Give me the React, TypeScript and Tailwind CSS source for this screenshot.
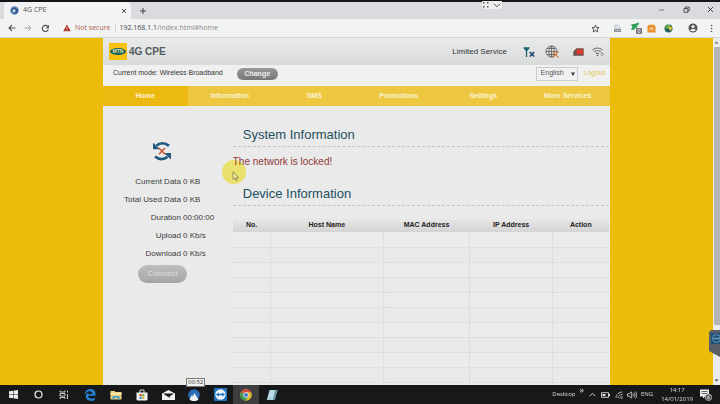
import { useState } from "react";
import type { ReactNode } from "react";

const menu = ["Home", "Information", "SMS", "Promotions", "Settings", "More Services"];

const stats = [
  { label: "Current Data", value: "0 KB" },
  { label: "Total Used Data", value: "0 KB" },
  { label: "Duration", value: "00:00:00" },
  { label: "Upload", value: "0 Kb/s" },
  { label: "Download", value: "0 Kb/s" },
];

const columns = [
  { name: "No.", width: "w-[10%]" },
  { name: "Host Name", width: "w-[30%]" },
  { name: "MAC Address", width: "w-[23%]" },
  { name: "IP Address", width: "w-[22%]" },
  { name: "Action", width: "w-[15%]" },
];

const rows = Array.from({ length: 11 }, (_, i) => i);

const TabBar = () => (
  <div className="flex h-[19px] shrink-0 border-t-2 border-[#15161a] bg-[#d9dbde]">
    <div className="ml-1 flex w-[127px] items-center rounded-t bg-[#f2f3f3] pl-[6px] pr-1">
      <svg viewBox="0 0 9 9" className="h-[9px] w-[9px]">
        <circle cx="4.5" cy="4.5" r="4.2" fill="#5b86b8" />
        <path d="M2 5.5C2 2 6 1.500 6.500 4.500M4.500 7C7 7 7.500 5 7 3" stroke="#1f3f77" strokeWidth="1.200" fill="none" />
        <circle cx="4" cy="4.600" r="1.300" fill="#dbe8f5" />
      </svg>
      <span className="ml-1 flex-1 text-[7px] text-[#555]">4G CPE</span>
      <button aria-label="Close tab">
        <svg viewBox="0 0 6 6" className="h-[6px] w-[6px]">
          <path d="M1 1l4 4M5 1l-4 4" stroke="#444" strokeWidth="0.9" />
        </svg>
      </button>
    </div>
    <button aria-label="New tab" className="ml-2">
      <svg viewBox="0 0 8 8" className="h-2 w-2">
        <path d="M4 1v6M1 4h6" stroke="#444" strokeWidth="1" />
      </svg>
    </button>
    <div className="ml-auto flex items-center pr-1 pb-[3px]">
      <button aria-label="Minimise" className="mr-[18px]">
        <svg viewBox="0 0 7 7" className="h-[7px] w-[7px]">
          <path d="M1 4h5" stroke="#666" strokeWidth="0.8" />
        </svg>
      </button>
      <button aria-label="Restore" className="mr-[17px]">
        <svg viewBox="0 0 7 7" className="h-[7px] w-[7px]" fill="none" stroke="#333" strokeWidth="0.8">
          <path d="M1 2.500h3.800v3.800H1zM2.300 2.300V1h3.900v3.900H5" />
        </svg>
      </button>
      <button aria-label="Close" className="mr-[2px]">
        <svg viewBox="0 0 7 7" className="h-[7px] w-[7px]">
          <path d="M1 1l5 5M6 1l-5 5" stroke="#222" strokeWidth="0.8" />
        </svg>
      </button>
    </div>
  </div>
);

const Toolbar = () => (
  <div className="flex h-[19px] shrink-0 items-center border-b border-[#d4d6d4] bg-[#f2f3f3] pl-2 pr-[7px] text-[7px]">
    <button aria-label="Back">
      <svg viewBox="0 0 8 8" className="h-2 w-2" fill="none" stroke="#555" strokeWidth="1.100">
        <path d="M7.500 4H1M4 1L1 4l3 3" />
      </svg>
    </button>
    <button aria-label="Forward" className="ml-2">
      <svg viewBox="0 0 8 8" className="h-2 w-2" fill="none" stroke="#aaa" strokeWidth="1">
        <path d="M.5 4H7M4 1l3 3-3 3" />
      </svg>
    </button>
    <button aria-label="Reload" className="ml-[9px]">
      <svg viewBox="0 0 9 9" className="h-[9px] w-[9px]">
        <path d="M7.300 5.600A3.100 3.100 0 1 1 6.800 2.400" fill="none" stroke="#555" strokeWidth="1.200" />
        <path d="M8 .8v3.400H4.600z" fill="#555" />
      </svg>
    </button>
    <svg viewBox="0 0 8 8" className="ml-[13px] h-2 w-2">
      <path d="M4 .5L7.800 7.300H.2z" fill="#b1372f" />
      <path d="M4 3v2M4 5.700v.8" stroke="#f2f3f3" strokeWidth="0.7" />
    </svg>
    <span className="ml-1 text-[#b0604f]">Not secure</span>
    <span className="mx-[4px] h-2 w-px bg-[#d5d5d5]" />
    <span className="flex-1 text-[#888]">
      <span className="text-[#444]">192.168.1.1</span>/index.html#home
    </span>
    <button aria-label="Bookmark this page">
      <svg viewBox="0 0 24 24" className="h-[9px] w-[9px]" fill="none" stroke="#444" strokeWidth="2.500">
        <path d="M12 3l2.700 6.300 6.800.6-5.200 4.500 1.600 6.700L12 17.500l-5.900 3.600 1.600-6.700L2.500 9.900l6.800-.6z" />
      </svg>
    </button>
    <svg viewBox="0 0 9 9" className="ml-[13px] h-[9px] w-[9px]">
      <path d="M2 1h3.500L7 2.500V5H2z" fill="#dfe2e8" stroke="#aab" strokeWidth="0.5" />
      <path d="M1 5h7v3H1z" fill="#8b8f9a" />
      <path d="M2 6.500h5" stroke="#ddd" strokeWidth="0.6" />
    </svg>
    <svg viewBox="0 0 12 12" className="ml-2 h-3 w-3">
      <path d="M1 2.500L4 2l5-1.500L8.500 3l-2 .8L8 5 5.500 6 4 8 .8 7.500 2.500 5z" fill="#2c9d59" />
      <rect x="6" y="6" width="6" height="6" rx="1" fill="#777" />
      <path d="M8 7.500h2v3H8z" fill="none" stroke="#ddd" strokeWidth="0.7" />
    </svg>
    <svg viewBox="0 0 9 9" className="ml-[5px] h-[9px] w-[9px]">
      <path d="M.5 2.500L2 .8h5l1.500 1.700v6h-8z" fill="#e88b25" />
      <path d="M2.500 5a2 2 0 0 1 4 0v1.500h-4z" fill="#f6c993" />
      <path d="M3.800 6.500V5h1.400v1.500" fill="#e88b25" />
    </svg>
    <svg viewBox="0 0 9 9" className="ml-2 h-[9px] w-[9px]">
      <circle cx="4.500" cy="4.500" r="4" fill="#2a6b54" />
      <path d="M1 3.500C2 1 5 .5 6.500 1.500L4.500 5z" fill="#6cb04c" />
      <path d="M5 2.500l3 .5-1 4-2-1.500z" fill="#e9bf32" />
      <path d="M2.500 5.500h3L5 8.300z" fill="#1f4a86" />
    </svg>
    <button aria-label="Profile" className="ml-[15px]">
      <svg viewBox="0 0 10 10" className="h-[10px] w-[10px]">
        <circle cx="5" cy="5" r="4.500" fill="#555" />
        <circle cx="5" cy="3.600" r="1.500" fill="#f2f3f3" />
        <path d="M2.200 7.200C3 5.600 7 5.600 7.800 7.200 7 8.700 3 8.700 2.200 7.200z" fill="#f2f3f3" />
      </svg>
    </button>
    <button aria-label="Menu" className="ml-3">
      <svg viewBox="0 0 3 9" className="h-[9px] w-[3px]" fill="#555">
        <circle cx="1.500" cy="1.500" r=".8" />
        <circle cx="1.500" cy="4.500" r=".8" />
        <circle cx="1.500" cy="7.500" r=".8" />
      </svg>
    </button>
  </div>
);

const SiteHeader = () => (
  <header className="flex h-[27px] items-center bg-linear-to-b from-[#e9eaea] to-[#d9dada] pl-[6px] pr-[6px]">
    <div className="flex h-[17px] w-[18px] items-center justify-center bg-[#f7c110]">
      <span className="flex h-[7px] w-[16px] items-center justify-center rounded-[50%] bg-[#14605f] text-[5px] font-bold leading-none text-[#e9e2a0]">
        MTN
      </span>
    </div>
    <h1 className="ml-[2px] flex-1 text-[10px] font-bold text-[#555b60]">4G CPE</h1>
    <span className="text-[8px] text-[#333]">Limited Service</span>
    <svg viewBox="0 0 12 12" className="ml-4 h-3 w-3" fill="none">
      <path d="M.5 1.800h6M1.200 2l2.300 2.800L5.800 2M3.500 2v9" stroke="#17606f" strokeWidth="1.300" />
      <path d="M6.800 6l4.400 4.500M11.200 6l-4.400 4.500" stroke="#123f72" strokeWidth="1.500" />
    </svg>
    <svg viewBox="0 0 15 14" className="ml-[10px] h-[14px] w-[15px]" fill="none">
      <g stroke="#666" strokeWidth="0.9">
        <circle cx="6.500" cy="6.500" r="5.500" />
        <ellipse cx="6.500" cy="6.500" rx="2.600" ry="5.500" />
        <path d="M6.500 1v11M1 6.500h11M2 3.500h9M2 9.500h9" />
      </g>
      <path d="M7.500 6.500l6 6M13.500 6.500l-6 6" stroke="#d67f4c" strokeWidth="1.200" />
    </svg>
    <svg viewBox="0 0 11 8" className="ml-[13px] h-2 w-[11px]">
      <path d="M3.500.3h7.200v7.400H.3V3.500z" fill="#69504e" />
      <path d="M4.500 1.200H10v5H3.500V3z" fill="#d83c31" />
    </svg>
    <svg viewBox="0 0 12 10" className="ml-2 h-[10px] w-3" fill="none" stroke="#777" strokeWidth="1.100">
      <path d="M.5 3.200c3-3 7-3 10 0M2.300 5c2-2 4.500-2 6.400 0M4 6.800c1-.9 2-.9 3 0" />
      <circle cx="5.500" cy="8.300" r=".8" fill="#555" stroke="none" />
      <ellipse cx="10.200" cy="7" rx="1" ry="1.600" strokeWidth="0.6" />
    </svg>
  </header>
);

const Section = ({ title, children }: { title: string; children: ReactNode }) => (
  <section>
    <h2 className="h-[21px] border-b border-dashed border-[#c3c3c3] pl-[10px] text-[13px] leading-[18px] text-[#1d4f60]">
      {title}
    </h2>
    {children}
  </section>
);

const Sidebar = () => (
  <aside className="flex w-[25%] flex-col pt-[35px]">
    <svg viewBox="0 0 20 20" className="ml-[49px] h-5 w-5" fill="none">
      <path d="M4.500 4.500C8 1.500 13 1.500 17 4.800" stroke="#21597f" strokeWidth="2.800" />
      <path d="M1 1.800v6.400h7z" fill="#21597f" />
      <path d="M15.500 15.800c-3.500 3-8.500 3-12.500-.3" stroke="#21597f" strokeWidth="2.800" />
      <path d="M19 18.500v-6.400h-7z" fill="#21597f" />
      <path d="M7 7l6 6.200M13 7l-6 6.200" stroke="#cc5233" strokeWidth="1.500" />
    </svg>
    <dl className="mt-3 text-[8px] leading-[18px] text-[#3c3c3c]">
      {stats.map((item) => (
        <div key={item.label} className="flex gap-[2px]">
          <dt className="w-[78px] text-right">{item.label}</dt>
          <dd>{item.value}</dd>
        </div>
      ))}
    </dl>
    <button className="ml-[35px] mt-[2px] h-[18px] w-[49px] rounded-full bg-linear-to-b from-[#bfbfbf] to-[#a5a5a5] text-[8px] text-[#dedede]">
      Connect
    </button>
  </aside>
);

const DeviceTable = () => (
  <table className="mt-[11px] w-full table-fixed border-collapse">
    <thead>
      <tr className="h-[15px] bg-linear-to-b from-[#ebebeb] to-[#d3d3d3] text-[7px] text-[#222]">
        {columns.map((col) => (
          <th key={col.name} className={`${col.width} p-0 font-bold leading-none`}>
            {col.name}
          </th>
        ))}
      </tr>
    </thead>
    <tbody>
      {rows.map((row) => (
        <tr key={row} className="h-[15px] odd:bg-[#ebebeb] even:bg-[#e8e9e9]">
          {columns.map((col) => (
            <td key={col.name} className="border-b border-r border-dotted border-[#d6d6d6] p-0 last:border-r-0" />
          ))}
        </tr>
      ))}
    </tbody>
  </table>
);

const Taskbar = () => (
  <footer className="relative flex h-[19px] shrink-0 items-center bg-[#17181a] text-[6px] text-[#ddd]">
    <nav className="flex h-full items-center">
      <button aria-label="Start" className="flex w-[26px] justify-center">
        <svg viewBox="0 0 9 9" className="h-[9px] w-[9px]" fill="#eee">
          <path d="M0 1.300L4 .8v3.400H0zM4.500.7L9 0v4.200H4.500zM0 4.800h4v3.400l-4-.5zM4.500 4.800H9V9l-4.500-.7z" />
        </svg>
      </button>
      <button aria-label="Cortana" className="flex w-[25px] justify-center">
        <svg viewBox="0 0 9 9" className="h-[9px] w-[9px]">
          <circle cx="4.500" cy="4.500" r="3.500" fill="none" stroke="#eee" strokeWidth="1.200" />
        </svg>
      </button>
      <button aria-label="Task view" className="flex w-[26px] justify-center">
        <svg viewBox="0 0 10 9" className="h-[9px] w-[10px]" fill="none" stroke="#ddd" strokeWidth="0.9">
          <path d="M1 .5v1.500h5V.5M1 3.500h5v2.500H1zM1 9V7.500h5V9M8.500.5v2M8.500 4v5" />
        </svg>
      </button>
      <button aria-label="Edge" className="flex w-[26px] justify-center">
        <svg viewBox="0 0 24 24" className="h-3 w-3">
          <path d="M1 11C2 3 8 0 13 0c6 0 10 4 10 10v3.500H8c.3 6 8 7 13.500 3.800v4.800C14 26 4 23.500 3.600 15 3.500 11 6 8 9.500 6.500 8.500 8 8 9 8 10h8.500c.2-4-2-5.500-5.200-5.400C7 4.700 3.500 7.500 1 11z" fill="#2580d2" />
        </svg>
      </button>
      <button aria-label="File Explorer" className="flex w-[26px] justify-center">
        <svg viewBox="0 0 12 10" className="h-[10px] w-3">
          <path d="M.5 1h4l1 1h6v7.500H.5z" fill="#f0d27a" />
          <path d="M.5 3h11v1.500H.5z" fill="#fbecb4" />
          <path d="M2.500 9.500V6h7v3.500h-2V7.800h-3v1.700z" fill="#4d9fc4" />
        </svg>
      </button>
      <button aria-label="Store" className="flex w-[26px] justify-center">
        <svg viewBox="0 0 12 12" className="h-3 w-3">
          <path d="M4 4V1h4v3" fill="none" stroke="#eee" strokeWidth="0.9" />
          <path d="M.5 3.500h11v7l-1 1h-9l-1-1z" fill="#f1f1f1" />
          <path d="M3.500 5h2.200v2.200H3.500z" fill="#d9512c" />
          <path d="M6.200 5h2.200v2.200H6.200z" fill="#7cae36" />
          <path d="M3.500 7.700h2.200v2.200H3.500z" fill="#3a8fd0" />
          <path d="M6.200 7.700h2.200v2.200H6.200z" fill="#e6b430" />
        </svg>
      </button>
      <button aria-label="Mail" className="flex w-[26px] justify-center">
        <svg viewBox="0 0 13 10" className="h-[10px] w-[13px]">
          <path d="M0 3.500L6.500 0 13 3.500V10H0z" fill="#f1f1f1" />
          <path d="M1 3.600h11L7.500 6.500 9 8 5.500 6.400z" fill="#17181a" />
        </svg>
      </button>
      <button aria-label="NordVPN" className="flex w-[26px] justify-center">
        <svg viewBox="0 0 12 12" className="h-3 w-3">
          <circle cx="6" cy="6" r="5.800" fill="#2d6eb8" />
          <path d="M1.500 10.500L4 6l1 1.400L6.300 4l4.200 6.500C8 12.500 4 12.500 1.500 10.500z" fill="#eef3f8" />
        </svg>
      </button>
      <button aria-label="TeamViewer" className="flex w-[26px] justify-center">
        <svg viewBox="0 0 13 13" className="h-[13px] w-[13px]">
          <rect width="13" height="13" rx="1" fill="#2272bd" />
          <circle cx="6.500" cy="6.500" r="5.200" fill="#eef4fa" />
          <path d="M1.800 6.500l3-2v1.300h3.400V4.500l3 2-3 2V7.200H4.800v1.300z" fill="#2272bd" />
        </svg>
      </button>
      <button aria-label="Chrome" className="flex h-full w-[26px] items-center justify-center bg-[#3e3e40]">
        <svg viewBox="0 0 12 12" className="h-3 w-3">
          <circle cx="6" cy="6" r="5.800" fill="#e3b92f" />
          <path d="M6 6L.9 3.200A5.800 5.800 0 0 1 11.100 3.300H6z" fill="#d44a3a" />
          <path d="M.9 3.200A5.800 5.800 0 0 0 5.500 11.800L8.200 7.300 6 6z" fill="#3c9b55" />
          <circle cx="6" cy="6" r="2.700" fill="#f1f1f1" />
          <circle cx="6" cy="6" r="2.100" fill="#4a80cf" />
        </svg>
      </button>
      <button aria-label="Notepad" className="flex w-[26px] justify-center">
        <svg viewBox="0 0 12 12" className="h-3 w-3">
          <path d="M3.500 1h8L8.800 11H.8z" fill="#a9d3dd" />
          <path d="M9.500 1h2L8.800 11H7z" fill="#628c98" />
          <path d="M4 3h4M3.500 5h4M3 7h4" stroke="#e6f4f7" strokeWidth="0.7" />
        </svg>
      </button>
    </nav>
    <span className="absolute bottom-[17px] left-[186px] border border-[#777] bg-[#f1f1f1] px-px text-[6px] leading-[7px] text-[#333]">
      00:52
    </span>
    <div className="ml-auto flex h-full items-center pr-2">
      <span>Desktop</span>
      <span className="ml-1 self-start text-[9px] leading-[9px]">»</span>
      <svg viewBox="0 0 7 5" className="ml-[5px] h-[5px] w-[7px]" fill="none" stroke="#ddd" strokeWidth="0.9">
        <path d="M.5 4.300l3-3 3 3" />
      </svg>
      <svg viewBox="0 0 9 6" className="ml-[5px] h-[6px] w-[9px]">
        <path d="M.5.7h7v4.600h-7z" fill="none" stroke="#ddd" strokeWidth="0.9" />
        <path d="M1.500 2h3v2h-3zM8 2h1v2H8z" fill="#ddd" />
      </svg>
      <svg viewBox="0 0 8 8" className="ml-[5px] h-2 w-2" fill="none" stroke="#bbb" strokeWidth="0.9">
        <path d="M1 7C1 3.500 4 1 7.500 1M3 7.200c0-2.200 2-4 4.500-4M5 7.400c0-1.200 1-2.200 2.500-2.200" />
        <circle cx="7" cy="7" r=".7" fill="#ddd" stroke="none" />
      </svg>
      <svg viewBox="0 0 10 8" className="ml-1 h-2 w-[10px]" fill="none" stroke="#ddd" strokeWidth="0.8">
        <path d="M.5 2.800h1.700L4.300.8v6.400L2.200 5.200H.5zM5.700 2.500c.8 1 .8 2 0 3M7 1.500c1.300 1.500 1.300 3.500 0 5M8.300.5c2 2.300 2 4.700 0 7" />
      </svg>
      <span className="ml-1">ENG</span>
      <time className="ml-2 text-center leading-[9px] whitespace-nowrap">
        14:17
        <br />
        14/01/2019
      </time>
      <svg viewBox="0 0 12 12" className="ml-[7px] h-3 w-3">
        <path d="M0 .5h9v7H5L3 9.500v-2H0z" fill="#eee" />
        <path d="M1.500 2.500h6M1.500 4.500h6" stroke="#333" strokeWidth="0.7" />
        <circle cx="8.500" cy="8.300" r="3.300" fill="#555" stroke="#ddd" strokeWidth="0.6" />
        <path d="M9.600 6.600C8 6.500 7.500 8 7.500 9s2 1.200 2 0-1.800-1-2 0" fill="none" stroke="#eee" strokeWidth="0.7" />
      </svg>
    </div>
  </footer>
);

const Scrollbar = () => (
  <div className="flex w-[7px] shrink-0 flex-col items-center bg-[#ebebeb]">
    <svg viewBox="0 0 7 9" className="h-[9px] w-[7px]">
      <path d="M1.500 5.500l2-2 2 2z" fill="#666" />
    </svg>
    <div className="w-[6px] flex-[11] bg-[#b5b5b5]" />
    <div className="flex-[2]" />
    <svg viewBox="0 0 7 9" className="h-[9px] w-[7px]">
      <path d="M1.500 3.500l2 2 2-2z" fill="#444" />
    </svg>
  </div>
);

export default function App() {
  const [active, setActive] = useState("Home");
  const [language, setLanguage] = useState("English");

  return (
    <div className="relative flex h-screen flex-col overflow-hidden font-['Open_Sans',sans-serif]">
      <TabBar />
      <Toolbar />
      <div className="flex min-h-0 flex-1">
        <div className="min-w-0 flex-1 overflow-hidden bg-[#ebbc08] font-['Liberation_Sans',Arial,sans-serif]">
          <div className="mx-auto min-h-full max-w-[507px] bg-[#eaeaea]">
            <SiteHeader />
            <div className="flex h-[21px] items-center bg-[#f0f0f0] pb-1 pl-[10px] pr-[5px] text-[7px] text-[#333]">
              <span>Current mode: Wireless Broadband</span>
              <button className="ml-[14px] h-3 w-[41px] rounded-full bg-linear-to-b from-[#999] to-[#777] font-bold leading-3 text-[#eee]">
                Change
              </button>
              <div className="relative ml-auto">
                <select
                  aria-label="Language"
                  value={language}
                  onChange={(e) => setLanguage(e.target.value)}
                  className="block h-[14px] w-[42px] appearance-none border border-[#ccc] bg-[#f0f0f0] pl-1 text-[7px] text-[#555]"
                >
                  <option>English</option>
                </select>
                <svg viewBox="0 0 4 4" className="pointer-events-none absolute right-[3px] top-[5px] h-1 w-1">
                  <path d="M0 .5h4L2 4z" fill="#333" />
                </svg>
              </div>
              <a href="#logout" className="ml-[6px] text-[#e3c750]">
                Logout
              </a>
            </div>
            <nav className="flex h-5 bg-[#edc740]">
              {menu.map((item) => (
                <button
                  key={item}
                  onClick={() => setActive(item)}
                  className={`flex-1 text-[7px] font-bold text-[#fbf3d5] ${active === item ? "bg-[#ebb90f]" : ""}`}
                >
                  {item}
                </button>
              ))}
            </nav>
            <main className="flex">
              <Sidebar />
              <div className="min-w-0 flex-1 pl-[3px] pr-px pt-5">
                <Section title="System Information">
                  <p className="h-[38px] pt-[8px] text-[10px] leading-[14px] text-[#8f3b35]">The network is locked!</p>
                </Section>
                <Section title="Device Information">
                  <DeviceTable />
                </Section>
              </div>
            </main>
          </div>
        </div>
        <Scrollbar />
      </div>
      <Taskbar />

      {/* floating window handle at the top of the desktop */}
      <div className="absolute left-[67%] top-px flex h-2 w-5 items-center justify-center gap-1 bg-[#eee]">
        <svg viewBox="0 0 6 6" className="h-[6px] w-[6px]" fill="#555">
          <path d="M0 0h1.500v1.500H0zM4 0h1.500v1.500H4zM0 4h1.500v1.500H0zM4 4h1.500v1.500H4z" />
        </svg>
        <svg viewBox="0 0 8 5" className="h-[5px] w-2" fill="none" stroke="#555">
          <path d="M1 .8l3 3 3-3" />
        </svg>
      </div>

      {/* pointer with its highlight */}
      <div className="pointer-events-none absolute left-[222px] top-[160px] h-6 w-6 rounded-full bg-[#fff04a]/75 mix-blend-multiply" />
      <svg viewBox="0 0 8 11" className="pointer-events-none absolute left-[232px] top-[171px] h-[11px] w-2">
        <path d="M1 .8v7.700l1.900-1.700 1.300 3 1.300-.6-1.300-2.900h2.400z" fill="#f3eeb0" stroke="#6d6a35" strokeWidth="0.7" />
      </svg>

      {/* TeamViewer side tab */}
      <svg viewBox="0 0 11 27" className="absolute right-0 top-[330px] h-[27px] w-[11px]">
        <path d="M2 0h9v27L0 21V2z" fill="#5b5e66" />
        <rect x="2" y="3" width="9" height="11" fill="#1e5076" />
        <circle cx="7.500" cy="8.500" r="4" fill="none" stroke="#6f9dc0" strokeWidth="0.9" />
        <path d="M4.500 8.500h6.500" stroke="#6f9dc0" strokeWidth="1.500" />
      </svg>
    </div>
  );
}
